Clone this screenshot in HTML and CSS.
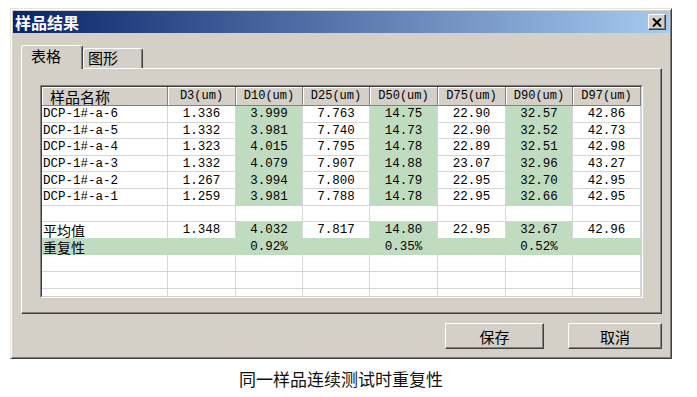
FILE: index.html
```html
<!DOCTYPE html>
<html lang="zh-CN">
<head>
  <meta charset="UTF-8" />
  <title>样品结果</title>
  <link rel="stylesheet" href="styles.css">
</head>
<body>
  <div class="figure">
    <div class="dialog">
      <div class="titlebar">
        <span class="title">样品结果</span>
        <button class="close" aria-label="关闭">
          <svg width="10" height="9" viewBox="0 0 10 9">
            <path d="M1 0.5 L9 8.5 M9 0.5 L1 8.5" stroke="#000" stroke-width="2" fill="none" />
          </svg>
        </button>
      </div>
      <div class="tabs">
        <div class="tab active">表格</div>
        <div class="tab">图形</div>
      </div>
      <div class="panel">
        <div class="grid">
          <div class="grid-body">
            <table>
              <colgroup>
                <col style="width: 126px">
                <col style="width: 68px">
                <col style="width: 67px">
                <col style="width: 67px">
                <col style="width: 68px">
                <col style="width: 68px">
                <col style="width: 67px">
                <col style="width: 68px">
              </colgroup>
              <thead>
                <tr>
                  <th class="name zh">样品名称</th>
                  <th>D3(um)</th>
                  <th>D10(um)</th>
                  <th>D25(um)</th>
                  <th>D50(um)</th>
                  <th>D75(um)</th>
                  <th>D90(um)</th>
                  <th>D97(um)</th>
                </tr>
              </thead>
              <tbody>
                <tr>
                  <td class="name">DCP-1#-a-6</td><td>1.336</td><td class="g">3.999</td><td>7.763</td>
                  <td class="g">14.75</td><td>22.90</td><td class="g">32.57</td><td>42.86</td>
                </tr>
                <tr>
                  <td class="name">DCP-1#-a-5</td><td>1.332</td><td class="g">3.981</td><td>7.740</td>
                  <td class="g">14.73</td><td>22.90</td><td class="g">32.52</td><td>42.73</td>
                </tr>
                <tr>
                  <td class="name">DCP-1#-a-4</td><td>1.323</td><td class="g">4.015</td><td>7.795</td>
                  <td class="g">14.78</td><td>22.89</td><td class="g">32.51</td><td>42.98</td>
                </tr>
                <tr>
                  <td class="name">DCP-1#-a-3</td><td>1.332</td><td class="g">4.079</td><td>7.907</td>
                  <td class="g">14.88</td><td>23.07</td><td class="g">32.96</td><td>43.27</td>
                </tr>
                <tr>
                  <td class="name">DCP-1#-a-2</td><td>1.267</td><td class="g">3.994</td><td>7.800</td>
                  <td class="g">14.79</td><td>22.95</td><td class="g">32.70</td><td>42.95</td>
                </tr>
                <tr>
                  <td class="name">DCP-1#-a-1</td><td>1.259</td><td class="g">3.981</td><td>7.788</td>
                  <td class="g">14.78</td><td>22.95</td><td class="g">32.66</td><td>42.95</td>
                </tr>
                <tr>
                  <td></td><td></td><td></td><td></td><td></td><td></td><td></td><td></td>
                </tr>
                <tr class="avg">
                  <td class="name zh">平均值</td><td>1.348</td><td class="g">4.032</td><td>7.817</td>
                  <td class="g">14.80</td><td>22.95</td><td class="g">32.67</td><td>42.96</td>
                </tr>
                <tr class="rep">
                  <td class="name zh">重复性</td><td></td><td>0.92%</td><td></td>
                  <td>0.35%</td><td></td><td>0.52%</td><td></td>
                </tr>
                <tr>
                  <td></td><td></td><td></td><td></td><td></td><td></td><td></td><td></td>
                </tr>
                <tr>
                  <td></td><td></td><td></td><td></td><td></td><td></td><td></td><td></td>
                </tr>
                <tr>
                  <td></td><td></td><td></td><td></td><td></td><td></td><td></td><td></td>
                </tr>
              </tbody>
            </table>
          </div>
        </div>
      </div>
      <div class="actions">
        <button class="btn save">保存</button>
        <button class="btn cancel">取消</button>
      </div>
    </div>
    <p class="caption">同一样品连续测试时重复性</p>
  </div>
</body>
</html>
```

FILE: styles.css
```css
body {
  margin: 0;
  background-color: #fff;
  font-family: "Noto Sans CJK SC", sans-serif;
  color: #000;
}

.figure {
  width: 662px;
  margin: 8px 0 0 10px;
}

.dialog {
  height: 351px;
  box-sizing: border-box;
  display: flex;
  flex-direction: column;
  padding: 2px;
  background-color: #d4d0c8;
  border: 1px solid;
  border-color: #e6e3dc #404040 #404040 #e6e3dc;
  box-shadow: inset 1px 1px #fff, inset -1px -1px #808080;
}

/* title bar */
.titlebar {
  height: 22px;
  flex: 0 0 22px;
  display: flex;
  align-items: center;
  justify-content: space-between;
  padding: 0 3px 0 2px;
  background: linear-gradient(to right, #0a246a, #a6caf0);
}

.title {
  color: #fff;
  font-weight: bold;
  font-size: 16px;
  line-height: 22px;
}

.close {
  width: 18px;
  height: 16px;
  padding: 0;
  display: flex;
  align-items: center;
  justify-content: center;
  background-color: #d4d0c8;
  border: 1px solid;
  border-color: #fff #404040 #404040 #fff;
  box-shadow: inset -1px -1px #808080;
}

/* tabs */
.tabs {
  display: flex;
  align-items: flex-end;
  margin: 12px 0 0 8px;
  position: relative;
  z-index: 1;
}

.tab {
  box-sizing: border-box;
  width: 60px;
  height: 20px;
  padding-left: 4px;
  font-size: 15px;
  line-height: 18px;
  background-color: #d4d0c8;
  border: 1px solid;
  border-bottom: none;
  border-color: #fff #404040 transparent #fff;
  border-radius: 3px 3px 0 0;
  box-shadow: inset -1px 0 #808080;
}

.tab.active {
  width: 62px;
  height: 24px;
  padding-left: 9px;
  line-height: 20px;
  margin-bottom: -1px;
}

.panel {
  box-sizing: border-box;
  height: 246px;
  margin: 0 7px 0 8px;
  padding: 16px 18px 0 18px;
  border: 1px solid;
  border-color: #fff #404040 #404040 #fff;
  box-shadow: inset -1px -1px #808080;
}

/* grid */
.grid {
  border: 1px solid;
  border-color: #808080 #fff #fff #808080;
}

.grid-body {
  height: 209px;
  overflow: hidden;
  background-color: #fff;
  border: 1px solid;
  border-color: #404040 #d4d0c8 #d4d0c8 #404040;
}

table {
  table-layout: fixed;
  width: 599px;
  border-collapse: separate;
  border-spacing: 0;
  font-family: "Liberation Mono", "Noto Sans CJK SC", monospace;
  font-size: 12.5px;
}

th {
  height: 19px;
  padding: 0;
  box-sizing: border-box;
  font-weight: normal;
  font-size: 12px;
  text-align: center;
  background-color: #d4d0c8;
  border-right: 1px solid #808080;
  border-bottom: 1px solid #808080;
  box-shadow: inset 1px 1px #fff;
}

th.name {
  text-align: left;
  padding-left: 8px;
  font-size: 15px;
  line-height: 17px;
}

tbody tr {
  height: 16.6px;
}

td {
  padding: 1px 0 0;
  line-height: 14px;
  text-align: center;
  white-space: nowrap;
  border-right: 1px solid #d6d6d6;
  border-bottom: 1px solid #d6d6d6;
}

td.name {
  text-align: left;
  padding-left: 1px;
}

.zh {
  font-family: "Noto Sans CJK SC", sans-serif;
}

td.zh {
  font-size: 14px;
  line-height: 14px;
}

td.g {
  background-color: #c0dcc0;
  border-bottom-color: #c0dcc0;
}

.avg td {
  border-bottom-color: #c0dcc0;
}

.rep td {
  background-color: #c0dcc0;
  border-color: #c0dcc0;
}

/* buttons */
.actions {
  display: flex;
  justify-content: flex-end;
  gap: 24px;
  margin: 9px 7px 0 0;
}

.btn {
  height: 26px;
  padding: 0;
  font-family: "Noto Sans CJK SC", sans-serif;
  font-size: 15px;
  color: #000;
  background-color: #d4d0c8;
  border: 1px solid;
  border-color: #fff #404040 #404040 #fff;
  box-shadow: inset -1px -1px #808080;
}

.save {
  width: 99px;
}

.cancel {
  width: 94px;
}

.caption {
  margin: 8px 0 0;
  text-align: center;
  font-size: 17px;
  line-height: 24px;
  color: #111;
}
```
